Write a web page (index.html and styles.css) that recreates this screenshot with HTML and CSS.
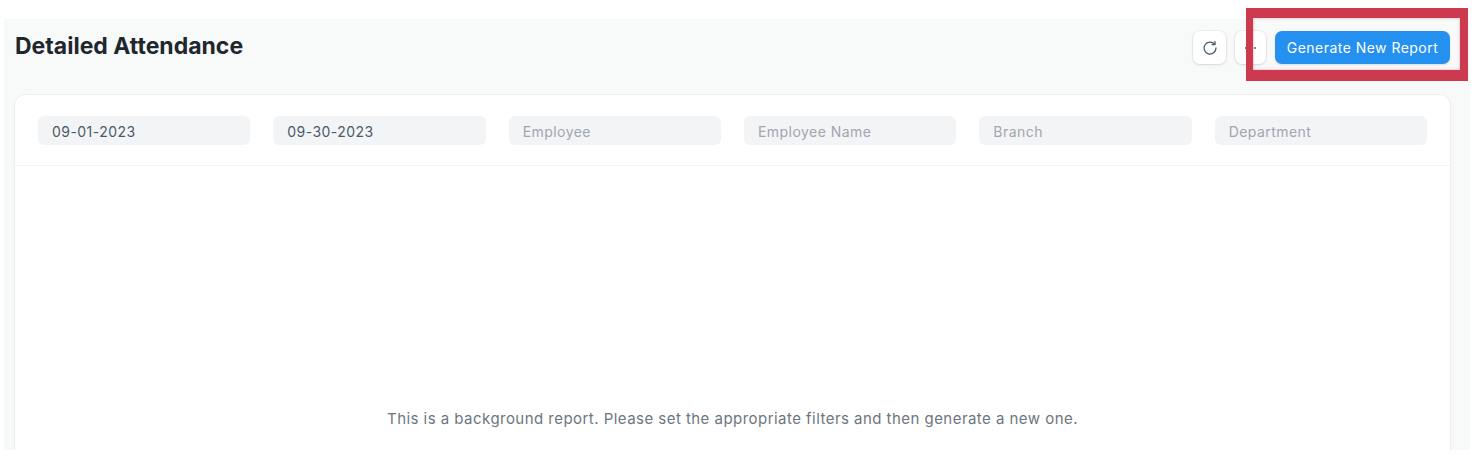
FILE: index.html
```html
<!DOCTYPE html>
<html lang="en">
<head>
<meta charset="utf-8">
<title>Detailed Attendance</title>
<link rel="stylesheet" href="styles.css">
</head>
<body>
<main class="page">
  <header class="head">
    <h1 class="title">Detailed Attendance</h1>
    <div class="actions">
      <button class="icon-btn refresh" type="button" aria-label="Refresh">
        <svg width="16" height="16" viewBox="0 0 16 16" fill="none" stroke="#4c5a67" stroke-width="1.3" stroke-linecap="round" stroke-linejoin="round"><path d="M12.6 4.2A6 6 0 1 0 14 8"/><path d="M13 1.6v3h-3"/></svg>
      </button>
      <button class="icon-btn more" type="button" aria-label="More">
        <svg width="12" height="4" viewBox="0 0 12 4" fill="#4c5a67"><circle cx="1" cy="2" r="1"/><circle cx="5.5" cy="2" r="1"/><circle cx="10" cy="2" r="1"/></svg>
      </button>
      <button class="primary" type="button">Generate New Report</button>
    </div>
  </header>
  <section class="card">
    <div class="filters">
      <div class="field value">09-01-2023</div>
      <div class="field value">09-30-2023</div>
      <div class="field">Employee</div>
      <div class="field">Employee Name</div>
      <div class="field">Branch</div>
      <div class="field">Department</div>
    </div>
    <p class="message">This is a background report. Please set the appropriate filters and then generate a new one.</p>
  </section>
</main>
<div class="highlight"></div>
</body>
</html>
```
FILE: styles.css
```css
* { box-sizing: border-box; }
html, body { margin: 0; padding: 0; background: #fff; height: 462px; overflow: hidden; }
body { position: relative; font-family: Inter, "Liberation Sans", sans-serif; color: #1f272e; padding: 19px 5px 12px 4px; }
.page { height: 431px; background: #f8f9f9; overflow: hidden; padding: 0 20px 0 11px; }
.head { display: flex; justify-content: space-between; height: 76px; padding-top: 12px; }
.title { margin: 0; font-size: 23px; line-height: 30px; font-weight: 700; color: #1f272e; }
.actions { display: flex; gap: 9px; align-items: flex-start; }
.icon-btn { display: flex; align-items: center; justify-content: center; height: 33px; padding: 0; background: #fff; border: 0; border-radius: 7px; box-shadow: 0 0 0 1px rgba(0,0,0,.04), 0 1px 3px rgba(0,0,0,.1); }
.refresh { width: 33px; }
.more { width: 31px; }
.primary { height: 33px; width: 175px; padding: 0; background: #2490ef; color: #fff; border: 0; border-radius: 7px; font: 400 14px Inter, "Liberation Sans", sans-serif; letter-spacing: .47px; box-shadow: 0 1px 2px rgba(0,0,0,.12); }
.card { height: 400px; background: #fff; border-radius: 10px; box-shadow: 0 0 0 1px rgba(0,0,0,.025), 0 1px 4px rgba(0,0,0,.05); }
.filters { display: grid; grid-template-columns: repeat(6, 1fr); gap: 23px; height: 71px; padding: 21px 23px 0; border-bottom: 1px solid #f4f5f6; }
.field { height: 29px; padding: 0 14px; background: #f3f4f6; border-radius: 6px; font-size: 14px; letter-spacing: .45px; line-height: 31px; color: #a0a7af; }
.value { color: #4c5a67; }
.message { margin: 243px 0 0; text-align: center; font-size: 15px; letter-spacing: .46px; line-height: 20px; color: #6c7680; }
.highlight { position: absolute; left: 1246px; top: 8px; width: 222px; height: 73px; border: solid #cc3a50; border-width: 10px 8px 11px 7px; box-shadow: inset 0 0 2px 1px rgba(204,58,80,.22); pointer-events: none; }
```
